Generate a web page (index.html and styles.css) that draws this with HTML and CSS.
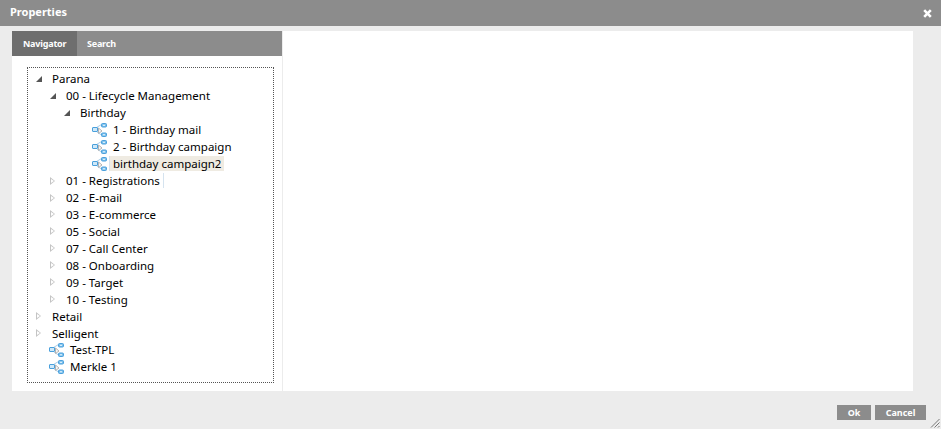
FILE: index.html
```html
<!DOCTYPE html>
<html lang="en">
<head>
    <meta charset="UTF-8">
    <title>Properties</title>
    <link rel="stylesheet" href="styles.css">
</head>
<body>
    <svg class="defs" width="0" height="0">
        <symbol id="wf" viewBox="0 0 15 14">
            <path d="M4.5 4.5 L9.5 1.5 M5 9 L9.5 12" fill="none" stroke="#a9cde8" stroke-width="1"/>
            <path d="M6.5 5 L10 8 L6.5 10.5 Z" fill="#f6f6f6" stroke="#b4b4b4" stroke-width="1"/>
            <rect x="0.5" y="4.5" width="5" height="4" rx="0.5" fill="#cfe8f8" stroke="#4aa0dc"/>
            <rect x="9.5" y="0.5" width="5" height="3.5" rx="1" fill="#7cc0ec" stroke="#4aa0dc"/>
            <rect x="9.5" y="10" width="5" height="3.5" rx="1" fill="#7cc0ec" stroke="#4aa0dc"/>
            <path d="M11 2.3 H13 M11 11.8 H13" stroke="#f0f8fd" fill="none"/>
        </symbol>
    </svg>
    <div class="dialog">
        <div class="titlebar">
            <span class="title">Properties</span>
            <svg class="close" width="9" height="9" viewBox="0 0 9 9">
                <path d="M1.2 1.2 L7.8 7.8 M7.8 1.2 L1.2 7.8" stroke="#fff" stroke-width="2.6" fill="none"/>
            </svg>
        </div>
        <div class="content">
            <div class="left">
                <div class="tabs">
                    <div class="tab active">Navigator</div>
                    <div class="tab">Search</div>
                </div>
                <div class="tree">
                    <div class="row l0"><i class="arrow open"></i><span class="label">Parana</span></div>
                    <div class="row l1"><i class="arrow open"></i><span class="label">00 - Lifecycle Management</span></div>
                    <div class="row l2"><i class="arrow open"></i><span class="label">Birthday</span></div>
                    <div class="row l3"><svg class="wf"><use href="#wf"/></svg><span class="label">1 - Birthday mail</span></div>
                    <div class="row l3"><svg class="wf"><use href="#wf"/></svg><span class="label">2 - Birthday campaign</span></div>
                    <div class="row l3"><svg class="wf"><use href="#wf"/></svg><span class="label selected">birthday campaign2</span></div>
                    <div class="row l1"><i class="arrow"></i><span class="label hovered">01 - Registrations</span></div>
                    <div class="row l1"><i class="arrow"></i><span class="label">02 - E-mail</span></div>
                    <div class="row l1"><i class="arrow"></i><span class="label">03 - E-commerce</span></div>
                    <div class="row l1"><i class="arrow"></i><span class="label">05 - Social</span></div>
                    <div class="row l1"><i class="arrow"></i><span class="label">07 - Call Center</span></div>
                    <div class="row l1"><i class="arrow"></i><span class="label">08 - Onboarding</span></div>
                    <div class="row l1"><i class="arrow"></i><span class="label">09 - Target</span></div>
                    <div class="row l1"><i class="arrow"></i><span class="label">10 - Testing</span></div>
                    <div class="row l0"><i class="arrow"></i><span class="label">Retail</span></div>
                    <div class="row l0"><i class="arrow"></i><span class="label">Selligent</span></div>
                    <div class="row lf"><svg class="wf"><use href="#wf"/></svg><span class="label">Test-TPL</span></div>
                    <div class="row lf"><svg class="wf"><use href="#wf"/></svg><span class="label">Merkle 1</span></div>
                </div>
            </div>
            <div class="right"></div>
        </div>
        <div class="footer">
            <button class="btn ok">Ok</button>
            <button class="btn cancel">Cancel</button>
            <svg class="grip" width="10" height="10" viewBox="0 0 10 10">
                <path d="M1 9.5 L9.5 1 M4.5 9.5 L9.5 4.5 M8 9.5 L9.5 8" stroke="#777" fill="none"/>
            </svg>
        </div>
    </div>
</body>
</html>
```
FILE: styles.css
```css
html, body {
    margin: 0;
    padding: 0;
    height: 100%;
}
body {
    background: #ececec;
    font-family: "Noto Sans", "DejaVu Sans", sans-serif;
    font-size: 11.5px;
    color: #000;
    overflow: hidden;
}
.defs {
    position: absolute;
}
.dialog {
    width: 941px;
    height: 429px;
    display: flex;
    flex-direction: column;
}
.titlebar {
    height: 26px;
    background: #8c8c8c;
    color: #fff;
    display: flex;
    align-items: center;
    justify-content: space-between;
    padding: 0 9px 0 10px;
    flex: none;
}
.title {
    font-weight: bold;
    font-size: 11px;
    margin-top: -3px;
}
.close {
    margin-top: 1px;
}
.content {
    display: flex;
    height: 360px;
    margin: 5px 28px 0 12px;
    background: #fff;
    flex: none;
}
.left {
    width: 270px;
    border-right: 1px solid #ececec;
    flex: none;
}
.right {
    flex: 1;
}
.tabs {
    display: flex;
    height: 25px;
    background: #8c8c8c;
}
.tab {
    color: #fff;
    font-size: 9px;
    font-weight: bold;
    letter-spacing: -0.2px;
    line-height: 25px;
    padding: 0 10px;
}
.tab.active {
    background: #6e6e6e;
    width: 54px;
    padding: 0 0 0 11px;
}
.tree {
    margin: 11px 8px 0 15px;
    height: 311.5px;
    border: 1px dotted #555;
    padding-top: 2.5px;
}
.row {
    display: flex;
    align-items: center;
    height: 16.95px;
    white-space: nowrap;
}
.l0 { padding-left: 8px; }
.l1 { padding-left: 22px; }
.l2 { padding-left: 36px; }
.l3 { padding-left: 64px; }
.lf { padding-left: 21px; }
.arrow {
    width: 0;
    height: 0;
    flex: none;
    margin-right: 11px;
    border-style: solid;
    border-width: 4px 0 4px 5px;
    border-color: transparent transparent transparent #c4c4c4;
    position: relative;
}
.arrow::after {
    content: "";
    position: absolute;
    left: -4px;
    top: -2px;
    border-style: solid;
    border-width: 2px 0 2px 3px;
    border-color: transparent transparent transparent #fff;
}
.arrow.open {
    border-width: 0 0 6px 6px;
    border-color: transparent transparent #555 transparent;
    margin-right: 10px;
}
.arrow.open::after {
    display: none;
}
.wf {
    width: 15px;
    height: 14px;
    flex: none;
    margin-right: 3px;
}
.label {
    padding: 0 3px 0 3px;
    line-height: 15px;
    margin-left: -3px;
}
.wf + .label {
    margin-left: 0;
}
.selected {
    background: #efebe2;
    border-left: 1px solid #d5e3ef;
    margin-left: -1px !important;
}
.hovered {
    border-right: 1px solid #d5e3ef;
}
.footer {
    flex: 1;
    display: flex;
    justify-content: flex-end;
    align-items: flex-start;
    gap: 4px;
    padding: 14px 15px 0 0;
    position: relative;
}
.btn {
    height: 15px;
    border: 0;
    padding: 0;
    background: #8c8c8c;
    color: #fff;
    font-family: inherit;
    font-size: 9px;
    font-weight: bold;
    line-height: 15px;
}
.ok { width: 34px; }
.cancel { width: 51px; }
.grip {
    position: absolute;
    right: 1px;
    bottom: 1px;
}
```
